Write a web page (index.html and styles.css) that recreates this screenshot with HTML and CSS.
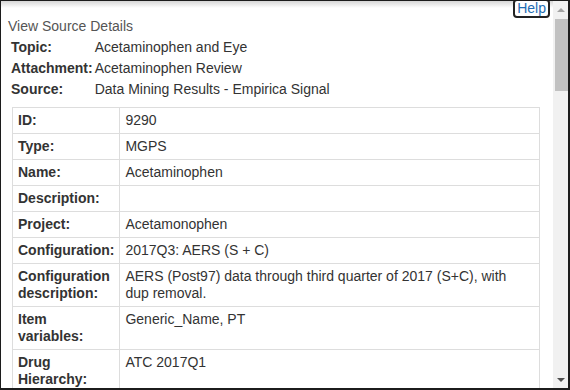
FILE: index.html
```html
<!DOCTYPE html>
<html>
<head>
<meta charset="utf-8">
<link rel="stylesheet" href="styles.css">
</head>
<body>
<div class="window">
  <div class="content">
    <a class="help" href="#">Help</a>
    <div class="title">View Source Details</div>
    <table class="summary">
      <tr><th>Topic:</th><td>Acetaminophen and Eye</td></tr>
      <tr><th>Attachment:</th><td>Acetaminophen Review</td></tr>
      <tr><th>Source:</th><td>Data Mining Results - Empirica Signal</td></tr>
    </table>
    <table class="details">
      <tr><th>ID:</th><td>9290</td></tr>
      <tr><th>Type:</th><td>MGPS</td></tr>
      <tr><th>Name:</th><td>Acetaminophen</td></tr>
      <tr><th>Description:</th><td></td></tr>
      <tr><th>Project:</th><td>Acetamonophen</td></tr>
      <tr><th>Configuration:</th><td>2017Q3: AERS (S + C)</td></tr>
      <tr><th>Configuration description:</th><td>AERS (Post97) data through third quarter of 2017 (S+C), with dup removal.</td></tr>
      <tr><th>Item variables:</th><td>Generic_Name, PT</td></tr>
      <tr><th>Drug Hierarchy:</th><td>ATC 2017Q1</td></tr>
    </table>
  </div>
  <div class="scrollbar">
    <div class="arrow up"></div>
    <div class="track"><div class="thumb"></div></div>
    <div class="arrow down"></div>
  </div>
</div>
</body>
</html>
```

FILE: styles.css
```css
html, body {
  margin: 0;
  padding: 0;
  background: #ffffff;
}

.window {
  width: 570px;
  height: 390px;
  box-sizing: border-box;
  border-style: solid;
  border-color: #1c1c1c;
  border-width: 1px 2px 2px 1px;
  display: flex;
  font-family: "Liberation Sans", Arial, sans-serif;
  font-size: 14px;
  line-height: 17px;
  color: #333333;
  overflow: hidden;
}

.content {
  flex: 1;
  position: relative;
  overflow: hidden;
  padding: 17px 8px 0 7px;
  background: #ffffff;
}

.content::before {
  content: "";
  position: absolute;
  left: 0;
  right: 0;
  top: 0;
  height: 7px;
  background: linear-gradient(rgba(0, 0, 0, 0.16), rgba(0, 0, 0, 0));
}

.help {
  position: absolute;
  top: -2px;
  right: 3px;
  z-index: 2;
  background: #ffffff;
  border: 2px solid #222222;
  border-radius: 4px;
  padding: 0 2px;
  line-height: 15px;
  color: #1f6db3;
  text-decoration: none;
}

.title {
  color: #555555;
}

.summary {
  margin-top: 1px;
  border-spacing: 2px;
}

.summary th,
.summary td {
  padding: 1px 0;
  text-align: left;
  vertical-align: top;
}

.summary th {
  padding-left: 1px;
  font-weight: bold;
}

.details {
  margin: 6px 0 0 4px;
  width: calc(100% - 9px);
  border-collapse: collapse;
}

.details th,
.details td {
  border: 1px solid #dddddd;
  padding: 4px 5px;
  text-align: left;
  vertical-align: top;
}

.details td {
  padding-right: 14px;
}

.details th {
  width: 1%;
  font-weight: bold;
}

.scrollbar {
  width: 15px;
  background: #f1f1f1;
  display: flex;
  flex-direction: column;
}

.arrow {
  height: 17px;
  display: flex;
  align-items: center;
  justify-content: center;
}

.arrow::after {
  content: "";
  width: 0;
  height: 0;
  border-left: 4px solid transparent;
  border-right: 4px solid transparent;
}

.arrow.up::after {
  border-bottom: 4px solid #a3a3a3;
}

.arrow.down::after {
  border-top: 4px solid #505050;
}

.track {
  flex: 1;
  padding-top: 1px;
}

.thumb {
  height: 72px;
  margin-left: 2px;
  background: #c1c1c1;
}
```
